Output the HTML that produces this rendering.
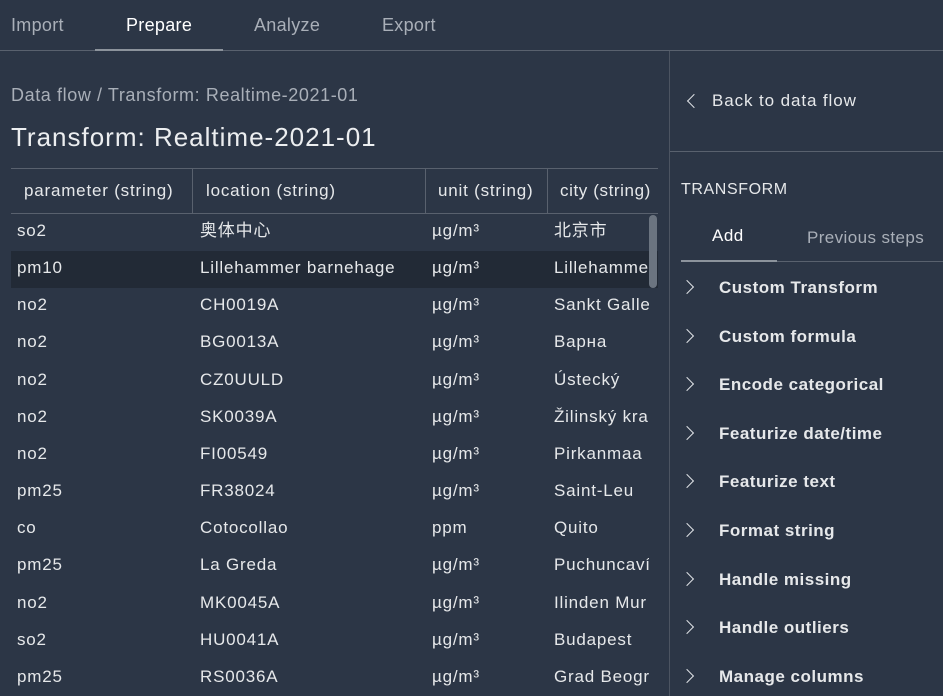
<!DOCTYPE html>
<html><head><meta charset="utf-8"><style>
*{margin:0;padding:0;box-sizing:border-box}
body{width:943px;height:696px;overflow:hidden;background:#2c3646;color:#e6e8ea;font-family:"Liberation Sans","Noto Sans CJK SC",sans-serif;position:relative}
.a{position:absolute;white-space:nowrap;line-height:20px}
.tab{top:15px;font-size:18px;color:#a9afb8;letter-spacing:0.3px}
.cell{font-size:17px;color:#e6e8ea;letter-spacing:0.8px}
.chev{position:absolute;width:10px;height:10px;border-right:1.8px solid #dfe2e6;border-top:1.8px solid #dfe2e6;transform:rotate(45deg)}
.item{font-size:17px;font-weight:bold;color:#e6e8ea;letter-spacing:0.5px}
</style></head><body>
<div class="a tab" style="left:11px">Import</div>
<div class="a tab" style="left:126px;color:#fff">Prepare</div>
<div class="a tab" style="left:254px">Analyze</div>
<div class="a tab" style="left:382px">Export</div>
<div class="a" style="left:0;top:50px;width:943px;height:1px;background:#59616e"></div>
<div class="a" style="left:95px;top:49px;width:128px;height:2px;background:#8c939c"></div>
<div class="a" style="left:669px;top:51px;width:1px;height:645px;background:#4c5461"></div>

<div class="a" style="left:11px;top:85px;font-size:18px;color:#a9afb8;letter-spacing:0.6px">Data flow / Transform: Realtime-2021-01</div>
<div class="a" style="left:11px;top:125px;font-size:26px;line-height:24px;color:#eceef0;letter-spacing:1px">Transform: Realtime-2021-01</div>

<div class="a" style="left:11px;top:168px;width:647px;height:1px;background:#59616e"></div>
<div class="a" style="left:11px;top:213px;width:647px;height:1px;background:#59616e"></div>
<div class="a" style="left:192px;top:169px;width:1px;height:44px;background:#59616e"></div>
<div class="a" style="left:425px;top:169px;width:1px;height:44px;background:#59616e"></div>
<div class="a" style="left:547px;top:169px;width:1px;height:44px;background:#59616e"></div>
<div class="a cell" style="left:24px;top:181px">parameter (string)</div>
<div class="a cell" style="left:206px;top:181px">location (string)</div>
<div class="a cell" style="left:438px;top:181px">unit (string)</div>
<div class="a cell" style="left:560px;top:181px;letter-spacing:0.6px">city (string)</div>
<div class="a" style="left:11px;top:251px;width:647px;height:37px;background:#222a36"></div>
<div class="a" style="left:649px;top:215px;width:8px;height:73px;border-radius:4px;background:#6b7480"></div>

<div id="rows"></div>
<script>
var d=[["so2","奥体中心","µg/m³","北京市"],["pm10","Lillehammer barnehage","µg/m³","Lillehammer"],["no2","CH0019A","µg/m³","Sankt Galle"],["no2","BG0013A","µg/m³","Варна"],["no2","CZ0UULD","µg/m³","Ústecký"],["no2","SK0039A","µg/m³","Žilinský kra"],["no2","FI00549","µg/m³","Pirkanmaa"],["pm25","FR38024","µg/m³","Saint-Leu"],["co","Cotocollao","ppm","Quito"],["pm25","La Greda","µg/m³","Puchuncaví"],["no2","MK0045A","µg/m³","Ilinden Mur"],["so2","HU0041A","µg/m³","Budapest"],["pm25","RS0036A","µg/m³","Grad Beogr"]];
var h="";d.forEach(function(r,i){var t=221+i*37.15;
h+='<div class="a cell" style="left:17px;top:'+t+'px">'+r[0]+'</div>';
h+='<div class="a cell" style="left:200px;top:'+t+'px">'+r[1]+'</div>';
h+='<div class="a cell" style="left:432px;top:'+t+'px">'+r[2]+'</div>';
h+='<div class="a cell" style="left:554px;top:'+t+'px;width:95px;overflow:hidden">'+r[3]+'</div>';});
var it=["Custom Transform","Custom formula","Encode categorical","Featurize date/time","Featurize text","Format string","Handle missing","Handle outliers","Manage columns"];
it.forEach(function(s,i){var t=288+i*48.6;
h+='<div class="chev" style="left:682px;top:'+(t-6)+'px"></div>';
h+='<div class="a item" style="left:719px;top:'+(t-10)+'px">'+s+'</div>';});
document.getElementById("rows").innerHTML=h;
</script>

<div class="chev" style="left:689px;top:96px;transform:rotate(-135deg)"></div>
<div class="a" style="left:712px;top:91px;font-size:17px;letter-spacing:0.9px">Back to data flow</div>
<div class="a" style="left:670px;top:151px;width:273px;height:1px;background:#59616e"></div>
<div class="a" style="left:681px;top:180px;font-size:16px;letter-spacing:0.6px">TRANSFORM</div>
<div class="a" style="left:712px;top:226px;font-size:17px;color:#fff;letter-spacing:0.5px">Add</div>
<div class="a" style="left:807px;top:228px;font-size:17px;color:#a9afb8;letter-spacing:0.4px">Previous steps</div>
<div class="a" style="left:681px;top:261px;width:262px;height:1px;background:#59616e"></div>
<div class="a" style="left:681px;top:260px;width:96px;height:2px;background:#8c939c"></div>
</body></html>
